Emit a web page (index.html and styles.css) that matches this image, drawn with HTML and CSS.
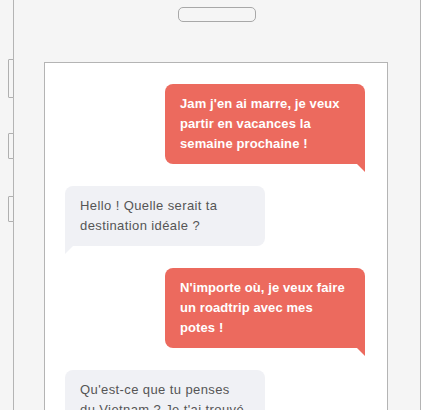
FILE: index.html
```html
<!DOCTYPE html>
<html lang="fr">
<head>
    <meta charset="UTF-8">
    <meta name="viewport" content="width=device-width, initial-scale=1.0">
    <title>Chat</title>
    <link rel="stylesheet" href="styles.css">
</head>
<body>
    <div class="phone">
        <span class="side-button volume-switch"></span>
        <span class="side-button volume-up"></span>
        <span class="side-button volume-down"></span>

        <div class="speaker"></div>

        <div class="screen">
            <div class="message sent">
                <p>Jam j'en ai marre, je veux partir en vacances la semaine prochaine !</p>
            </div>
            <div class="message received">
                <p>Hello ! Quelle serait ta destination idéale ?</p>
            </div>
            <div class="message sent">
                <p>N'importe où, je veux faire un roadtrip avec mes potes !</p>
            </div>
            <div class="message received">
                <p>Qu'est-ce que tu penses du Vietnam ? Je t'ai trouvé un super itinéraire !</p>
            </div>
        </div>
    </div>
</body>
</html>
```

FILE: styles.css
```css
html, body {
    height: 100%;
}

body {
    margin: 0;
    padding: 0;
    background-color: #f5f5f5;
    font-family: "Liberation Sans", Arial, sans-serif;
    overflow: hidden;
}

.phone {
    position: relative;
    box-sizing: border-box;
    width: 408px;
    min-height: 700px;
    margin-left: 13px;
    padding-top: 7px;
    border-left: 1px solid #b4b4b4;
    border-right: 1px solid #b4b4b4;
    background-color: #f5f5f5;
}

.side-button {
    position: absolute;
    left: -6px;
    width: 6px;
    box-sizing: border-box;
    border: 1px solid #b0b0b0;
    border-radius: 1px;
    background-color: #f5f5f5;
}

.volume-switch {
    top: 59px;
    height: 39px;
}

.volume-up {
    top: 133px;
    height: 26px;
}

.volume-down {
    top: 196px;
    height: 26px;
}

.speaker {
    box-sizing: border-box;
    width: 78px;
    height: 15px;
    margin: 0 auto 40px;
    border: 1px solid #a8a8a8;
    border-radius: 5px;
}

.screen {
    display: flex;
    flex-direction: column;
    box-sizing: border-box;
    width: 344px;
    min-height: 600px;
    margin-left: 30px;
    padding: 21px 22px 20px 20px;
    border: 1px solid #b4b4b4;
    background-color: white;
}

.message {
    position: relative;
    width: 200px;
    box-sizing: border-box;
    margin-bottom: 22px;
    padding: 10px 16px 10px 15px;
    border-radius: 8px;
    font-size: 13px;
    line-height: 20px;
}

.message p {
    margin: 0;
}

.message::after {
    content: "";
    position: absolute;
    top: 100%;
    border-top: 8px solid;
}

.sent {
    align-self: flex-end;
    border-bottom-right-radius: 0;
    background-color: #ec6a5e;
    color: white;
    font-weight: bold;
    letter-spacing: 0.1px;
}

.sent::after {
    right: 0;
    border-top-color: #ec6a5e;
    border-left: 8px solid transparent;
}

.received {
    align-self: flex-start;
    padding-right: 18px;
    border-bottom-left-radius: 0;
    background-color: #f0f1f5;
    color: #555;
    letter-spacing: 0.4px;
}

.received::after {
    left: 0;
    border-top-color: #f0f1f5;
    border-right: 8px solid transparent;
}
```
